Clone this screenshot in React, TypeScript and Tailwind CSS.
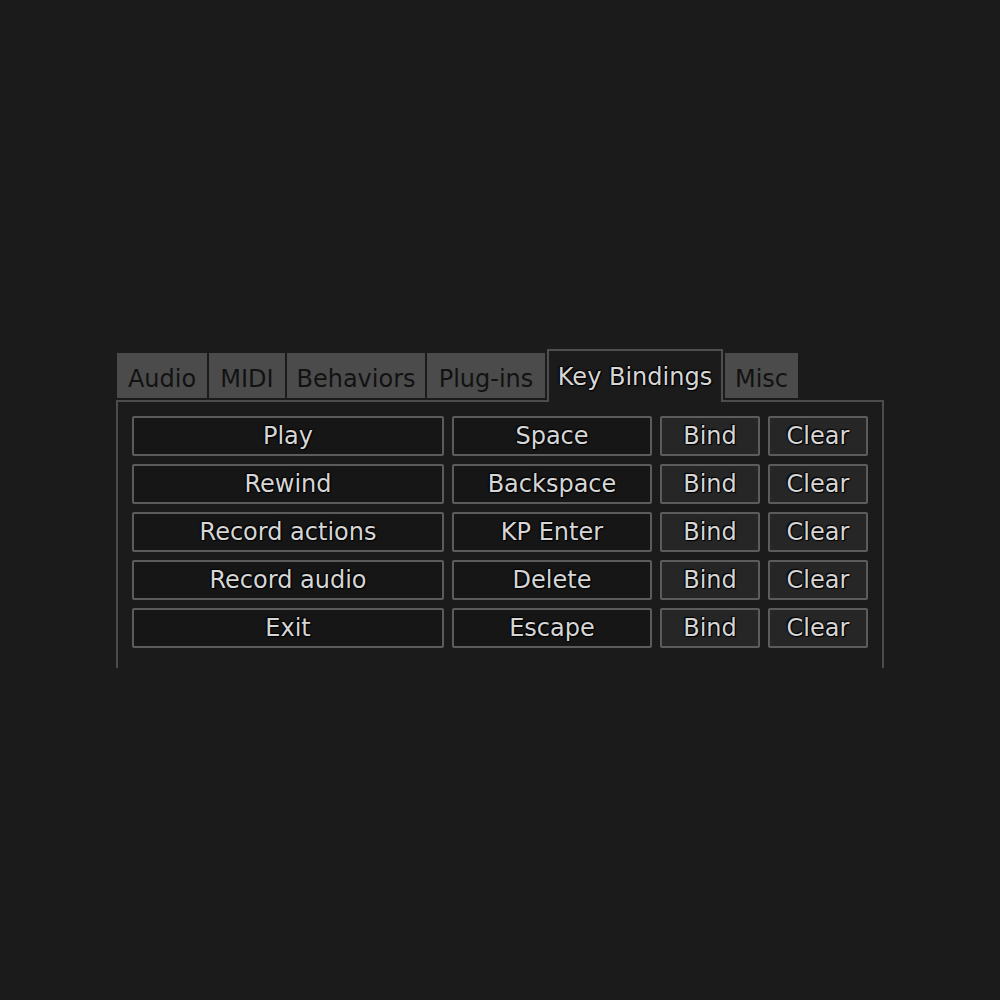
const tabs = [
  { label: "Audio", width: "w-[90px]" },
  { label: "MIDI", width: "w-[76px]" },
  { label: "Behaviors", width: "w-[138px]" },
  { label: "Plug-ins", width: "w-[118px]" },
  { label: "Key Bindings", width: "w-[176px]", active: true },
  { label: "Misc", width: "w-[73px]" },
];

const bindings = [
  { action: "Play", key: "Space" },
  { action: "Rewind", key: "Backspace" },
  { action: "Record actions", key: "KP Enter" },
  { action: "Record audio", key: "Delete" },
  { action: "Exit", key: "Escape" },
];

const outlined =
  "text-[#d6d6d6] [text-shadow:0_0_1px_#000,0_0_2px_#000,1px_1px_1px_#000,-1px_-1px_1px_#000]";

function Cell({ label, className }: { label: string; className: string }) {
  return (
    <div
      className={`flex h-[40px] items-center justify-center rounded-[2px] border-2 border-[#5c5c5c] ${outlined} ${className}`}
    >
      {label}
    </div>
  );
}

export default function App() {
  return (
    <div
      className="h-[1000px] w-[1000px] bg-[#1b1b1b] pl-[116px] pt-[349px] text-[24px] leading-none"
      style={{ fontFamily: '"DejaVu Sans", "Liberation Sans", sans-serif' }}
    >
      <div className="w-[768px]">
        {/* tab strip */}
        <div className="flex h-[51px] items-end gap-[2px] pl-[1px]">
          {tabs.map((tab) =>
            tab.active ? (
              <div
                key={tab.label}
                className={`relative z-10 -mb-[2px] flex h-[53px] items-center justify-center border-2 border-b-0 border-[#4e4e4e] bg-[#1b1b1b] ${outlined} ${tab.width}`}
              >
                {tab.label}
              </div>
            ) : (
              <div
                key={tab.label}
                className={`mb-[2px] flex h-[45px] items-center justify-center bg-[#4b4b4b] pt-[7px] text-[#121212] ${tab.width}`}
              >
                {tab.label}
              </div>
            ),
          )}
        </div>

        {/* key binding panel, bottom edge runs off the window */}
        <div className="h-[268px] border-2 border-b-0 border-[#4c4c4c] px-[14px] pt-[14px]">
          <div className="flex flex-col gap-[8px]">
            {bindings.map((row) => (
              <div key={row.action} className="flex gap-[8px]">
                <Cell label={row.action} className="w-[312px] bg-[#161616]" />
                <Cell label={row.key} className="w-[200px] bg-[#161616]" />
                <Cell label="Bind" className="w-[100px] bg-[#262626]" />
                <Cell label="Clear" className="w-[100px] bg-[#262626]" />
              </div>
            ))}
          </div>
        </div>
      </div>
    </div>
  );
}
